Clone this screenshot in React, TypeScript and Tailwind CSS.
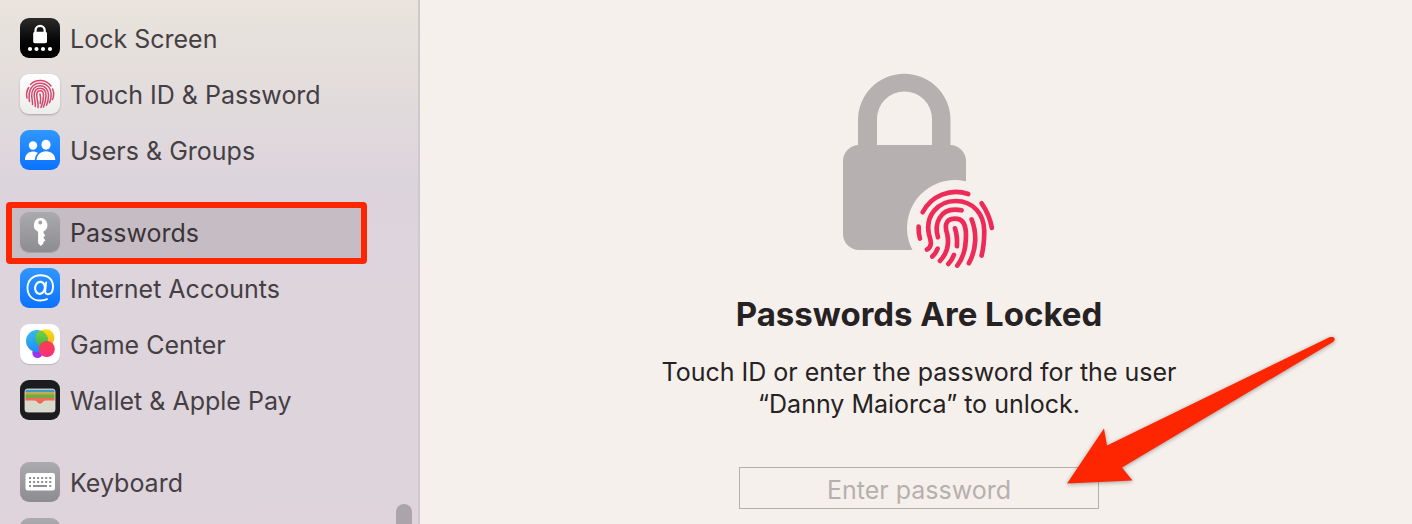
import { type ReactNode } from 'react';

type SettingsItem = {
  title: string;
  href: string;
  icon: ReactNode;
  active?: boolean;
};

function FingerprintLines() {
  return (
    <g fill="none" strokeLinecap="round" strokeLinejoin="round">
      <path d="M53 112A112 112 0 0 1 190 57" />
      <path d="M230 85Q253 117 261 159" />
      <path d="M41 155Q40 175 45 191" />
      <path d="M66 224C84 213 77 196 72 178C60 125 97 78 152 78C205 78 238 118 238 168Q238 210 230 242" />
      <path d="M99 187C86 142 108 104 150 104Q161 104 170 106" />
      <path d="M200 133C217 175 214 225 192 265" />
      <path d="M105 258C130 232 132 203 127 178C120 158 118 131 150 131C174 131 183 148 183 178Q184 238 157 272" />
      <path d="M150 160Q158 185 156 214" />
      <path d="M82 245Q92 236 98 221" />
      <path d="M130 267Q140 258 147 240" />
    </g>
  );
}

function LockScreenIcon() {
  return (
    <svg viewBox="0 0 40 40" className="size-10 rounded-[9px] bg-linear-to-b from-[#2c2c2c] to-black">
      <path d="M15.500 15v-2.500a4.600 4.600 0 0 1 9.200 0V15" fill="none" stroke="white" strokeWidth="2.300" />
      <rect x="13.200" y="13.800" width="13.800" height="11.500" rx="1.800" fill="white" />
      <g fill="white">
        <circle cx="10" cy="31" r="2.100" />
        <circle cx="16.500" cy="31" r="2.100" />
        <circle cx="23" cy="31" r="2.100" />
        <circle cx="30" cy="31" r="2.100" />
      </g>
    </svg>
  );
}

function TouchIdIcon() {
  return (
    <svg
      viewBox="0 0 40 40"
      className="size-10 rounded-[9px] bg-linear-to-b from-white to-[#ececea] shadow-[0_1px_2px_rgba(0,0,0,0.25)]"
    >
      <g fill="none" stroke="#d4476a" strokeWidth="1.500" strokeLinecap="round">
        <path d="M10.500 10.500A13.600 13.600 0 0 1 31 12" />
        <path d="M7 24A13.600 13.600 0 0 1 8.700 13.500" />
        <path d="M32.600 15A13.600 13.600 0 0 1 32.500 25.500" />
        <path d="M9.500 27.500C7.800 17 11.500 9.200 20 9.200c7.800 0 11.800 6 11 13.500-.2 2.500-.8 4.300-1.500 6" />
        <path d="M12.500 30.500c.3-3-.8-5.500-.8-9 0-6 3.300-9.800 8.300-9.800 5.300 0 8.500 4 8.500 9.500 0 4-.8 7.300-2 10" />
        <path d="M15.200 32.500c.7-4-1-7.500-1-11.500 0-4 2.200-6.800 5.800-6.800 3.900 0 6 3 6 7.300 0 4-1 7.500-2.500 11.500" />
        <path d="M18 33.500c.8-4.500-1.300-8.500-1.300-12.500 0-2.600 1.300-4.300 3.500-4.300 2.300 0 3.300 2 3.300 4.800 0 4.500-.9 8-2.500 12" />
        <path d="M20 20c1 3.500.8 6.500.2 9.500" />
      </g>
    </svg>
  );
}

function UsersIcon() {
  return (
    <svg viewBox="0 0 40 40" className="size-10 rounded-[9px] bg-linear-to-b from-[#3096ff] to-[#0a72ff]">
      <g fill="white">
        <circle cx="13" cy="15.500" r="4.200" />
        <path d="M5 30c0-5 3-8.500 8-8.500 2 0 3.500.5 4.800 1.500C16 24.700 15 27 14.800 30z" />
        <ellipse cx="26" cy="14.800" rx="4.600" ry="5" />
        <path d="M16.500 30c.3-5.200 4-8.800 9.500-8.800s9.300 3.600 9.300 8.800z" />
      </g>
    </svg>
  );
}

function PasswordsIcon() {
  return (
    <svg
      viewBox="0 0 40 40"
      className="size-10 rounded-[9px] bg-linear-to-b from-[#abaaae] to-[#8d8c90] shadow-[0_1px_1px_rgba(0,0,0,0.15)]"
    >
      <path
        fill="white"
        fillRule="evenodd"
        d="M20.300 6a7.200 7.200 0 0 1 3.200 13.600v1.700l1.800 2-2 2.400 2.100 2.500-2.200 2.200.2 1.200-2.600 2.400-2.700-2.800V19.700A7.200 7.200 0 0 1 20.300 6zm0 2.600a2 2 0 1 0 0 4 2 2 0 0 0 0-4z"
      />
    </svg>
  );
}

function InternetIcon() {
  return (
    <svg viewBox="0 0 40 40" className="size-10 rounded-[9px] bg-linear-to-b from-[#3096ff] to-[#0a72ff]">
      <g fill="none" stroke="white" strokeLinecap="round">
        <path
          strokeWidth="1.900"
          d="M27 31.200c-2 .9-4.200 1.300-6.500 1.300C12.500 32.500 7.500 27.500 7.500 20S12.800 7.200 20.500 7.200 33 11.500 33 18.500c0 5-2 7.700-5 7.700-2 0-3-1.200-2.800-3l.9-8.700"
        />
        <ellipse cx="20" cy="19.800" rx="4.900" ry="6" strokeWidth="2.200" transform="rotate(10 20 19.800)" />
      </g>
    </svg>
  );
}

function GameCenterIcon() {
  return (
    <svg viewBox="0 0 40 40" className="size-10 rounded-[9px] bg-white shadow-[0_1px_1px_rgba(0,0,0,0.15)]">
      <defs>
        <linearGradient id="gcBlue" x1="0" y1="0" x2="0.300" y2="1">
          <stop offset="0" stopColor="#35c0e8" />
          <stop offset="1" stopColor="#268cf5" />
        </linearGradient>
        <linearGradient id="gcYellow" x1="0.500" y1="0" x2="0.400" y2="1">
          <stop offset="0" stopColor="#fbe10e" />
          <stop offset="1" stopColor="#f0a52c" />
        </linearGradient>
        <linearGradient id="gcGreen" x1="0" y1="0" x2="0" y2="1">
          <stop offset="0" stopColor="#86d42e" />
          <stop offset="1" stopColor="#2cb35a" />
        </linearGradient>
        <linearGradient id="gcPink" x1="0" y1="0" x2="0" y2="1">
          <stop offset="0" stopColor="#fb4048" />
          <stop offset="1" stopColor="#f82f7d" />
        </linearGradient>
        <clipPath id="gcOverlap">
          <circle cx="17" cy="17" r="11" />
        </clipPath>
      </defs>
      <circle cx="17.500" cy="28.800" r="5.200" fill="#9a35ee" />
      <circle cx="26" cy="13.800" r="8.500" fill="url(#gcYellow)" />
      <circle cx="17" cy="17" r="11" fill="url(#gcBlue)" />
      <circle cx="25" cy="14.500" r="9.500" fill="url(#gcGreen)" clipPath="url(#gcOverlap)" />
      <circle cx="26.800" cy="25" r="8" fill="url(#gcPink)" />
    </svg>
  );
}

function WalletIcon() {
  return (
    <svg viewBox="0 0 40 40" className="size-10 rounded-[9px] bg-[#1c1b1f]">
      <defs>
        <clipPath id="walletCard">
          <rect x="5" y="9" width="30" height="23" rx="2.500" />
        </clipPath>
      </defs>
      <g clipPath="url(#walletCard)">
        <rect x="5" y="9" width="30" height="23" fill="#d9d9cd" />
        <rect x="5" y="9.500" width="30" height="3" fill="#4598bd" />
        <rect x="5" y="12.500" width="30" height="3" fill="#c9aa35" />
        <rect x="5" y="14.500" width="30" height="4" fill="#72ab40" />
        <path d="M5 18h30v2.500h-9.500c-1.500 0-2 .8-2.700 1.600-1.500 2-4.100 2-5.600 0-.7-.8-1.200-1.600-2.700-1.600H5z" fill="#ef6a58" />
      </g>
      <rect x="5" y="9" width="30" height="23" rx="2.500" fill="none" stroke="#e3e3dc" strokeWidth="0.800" />
    </svg>
  );
}

function KeyboardIcon() {
  return (
    <svg viewBox="0 0 40 40" className="size-10 rounded-[9px] bg-linear-to-b from-[#abaaae] to-[#8d8c90]">
      <rect x="5.500" y="11" width="29.500" height="17.500" rx="2.500" fill="white" />
      <g stroke="#8f8e92" strokeWidth="1.800">
        <path d="M9 16h22.500M9 20h22.500" strokeDasharray="2 2.050" />
        <path d="M9 24h2M13 24h14M29.300 24h2" />
      </g>
    </svg>
  );
}

function BlankIcon() {
  return <span className="block size-10 rounded-[9px] bg-linear-to-b from-[#abaaae] to-[#8d8c90]" />;
}

const groups: SettingsItem[][] = [
  [
    { title: 'Lock Screen', href: '#lock-screen', icon: <LockScreenIcon /> },
    { title: 'Touch ID & Password', href: '#touch-id', icon: <TouchIdIcon /> },
    { title: 'Users & Groups', href: '#users', icon: <UsersIcon /> },
  ],
  [
    { title: 'Passwords', href: '#passwords', icon: <PasswordsIcon />, active: true },
    { title: 'Internet Accounts', href: '#internet-accounts', icon: <InternetIcon /> },
    { title: 'Game Center', href: '#game-center', icon: <GameCenterIcon /> },
    { title: 'Wallet & Apple Pay', href: '#wallet', icon: <WalletIcon /> },
  ],
  [
    { title: 'Keyboard', href: '#keyboard', icon: <KeyboardIcon /> },
    { title: '', href: '#more', icon: <BlankIcon /> },
  ],
];

function Sidebar() {
  return (
    <nav className="relative w-[420px] shrink-0 overflow-hidden border-r-2 border-[#cfc8cc] bg-linear-to-b from-[#e9e4dc] via-[#dcd4dc] via-35% to-[#dfd4dc]">
      <div className="flex flex-col gap-[26px] py-2.5 pr-[55px] pl-2.5">
        {groups.map((items, index) => (
          <ul key={index}>
            {items.map((item) => (
              <li key={item.href} className="relative">
                <a
                  href={item.href}
                  className={
                    item.active
                      ? 'flex h-14 items-center gap-2.5 rounded-lg bg-[#c6bcc3] px-2.5 text-[#3b3439]'
                      : 'flex h-14 items-center gap-2.5 px-2.5 text-[#453f44]'
                  }
                >
                  {item.icon}
                  <span className="pt-0.5">{item.title}</span>
                </a>
                {item.active && (
                  <div className="pointer-events-none absolute -inset-x-1 -top-0.5 -bottom-1 rounded-sm border-6 border-[#fd2600]" />
                )}
              </li>
            ))}
          </ul>
        ))}
      </div>
      <div className="absolute right-1.5 bottom-0 h-5 w-4 rounded-t-full bg-[#aca4ab]" />
    </nav>
  );
}

function LockedBadge() {
  return (
    <svg viewBox="0 0 152 196" className="h-[196px] w-[152px]">
      <defs>
        <mask id="badgeCutout">
          <rect width="152" height="196" fill="white" />
          <circle cx="112" cy="155" r="48" fill="black" />
        </mask>
      </defs>
      <g mask="url(#badgeCutout)" fill="#b6b1b0">
        <path d="M15 80V47a46 46 0 0 1 92.500 0v33H89V46a27.300 27.300 0 0 0-55 0v34z" />
        <rect x="0" y="72" width="123" height="105" rx="16" />
      </g>
      <g transform="translate(62 102) scale(0.333)" stroke="#ee2b58" strokeWidth="14">
        <FingerprintLines />
      </g>
    </svg>
  );
}

function Arrow() {
  return (
    <svg
      viewBox="0 0 272 156"
      className="pointer-events-none absolute bottom-4 left-[328px] h-[156px] w-[272px] drop-shadow-[0_1px_2px_rgba(0,0,0,0.35)]"
    >
      <path
        d="M0 146.500L37 91.500L40 108.500L263 0C267-1.500 269.500 2.500 266 5L55 130.500L65.500 143.500z"
        fill="#fd2600"
      />
    </svg>
  );
}

export default function App() {
  return (
    <div className="flex h-screen overflow-hidden bg-[#f5f0ec] font-['Inter',sans-serif] text-[25px] leading-8">
      <Sidebar />
      <main className="flex flex-1 flex-col items-center pt-[73px] pl-1.5 text-center text-[#262223]">
        <LockedBadge />
        <h1 className="mt-[25px] text-[33px] leading-10 font-bold">Passwords Are Locked</h1>
        <p className="mt-[22px]">
          Touch ID or enter the password for the user
          <br />
          “Danny Maiorca” to unlock.
        </p>
        <form className="relative mt-[47px] w-[360px]" onSubmit={(e) => e.preventDefault()}>
          <input
            type="password"
            aria-label="Password"
            placeholder="Enter password"
            className="block h-[42px] w-full border border-[#b5b0ae] pt-1 text-center outline-none placeholder:text-[#b5b0ae]"
          />
          <Arrow />
        </form>
      </main>
    </div>
  );
}
